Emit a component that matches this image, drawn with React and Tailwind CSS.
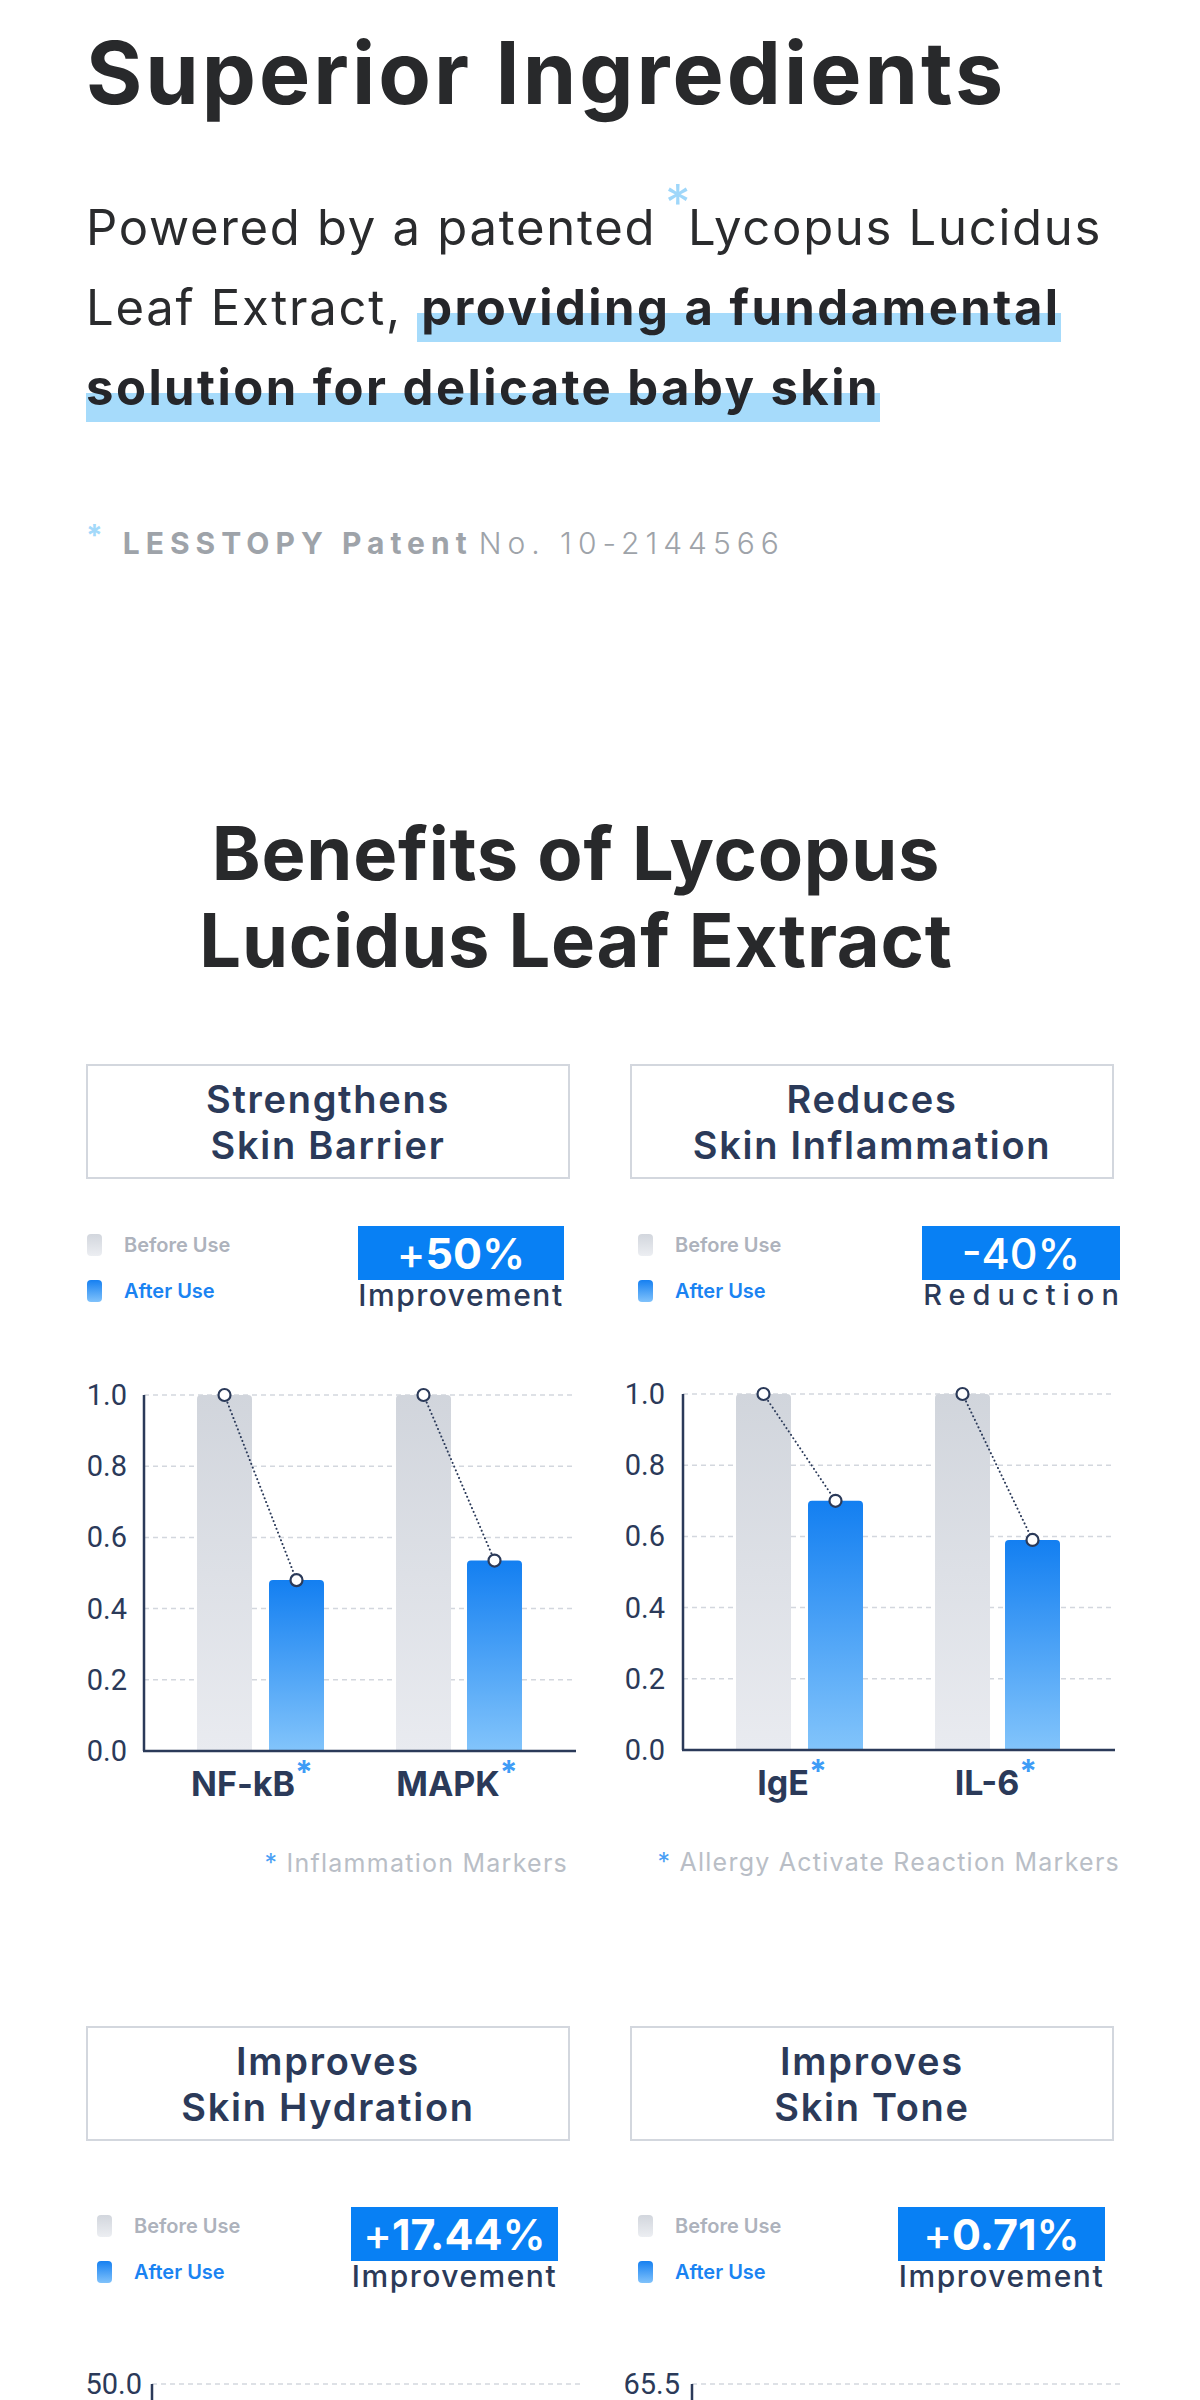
import React from 'react';

const NAVY = '#2b3a59';

function barPath(x, w, top, bottom) {
  const r = 4;
  return `M${x},${bottom} L${x},${top + r} Q${x},${top} ${x + r},${top} L${x + w - r},${top} Q${x + w},${top} ${x + w},${top + r} L${x + w},${bottom} Z`;
}

function Chart({ id, axisX, labelRight, gridEnd, groups, yLabels }) {
  const y0 = 25;
  const yb = 381;
  const h = yb - y0;
  const grids = [0, 1, 2, 3, 4].map((i) => y0 + (i * h) / 5);
  const bw = 55;
  return (
    <svg width="500" height="440" viewBox="0 0 500 440" className="block overflow-visible">
      <defs>
        <linearGradient id={`${id}-g`} x1="0" y1="0" x2="0" y2="1">
          <stop offset="0" stopColor="#d1d5dc" />
          <stop offset="1" stopColor="#e9ebf0" />
        </linearGradient>
        <linearGradient id={`${id}-b`} x1="0" y1="0" x2="0" y2="1">
          <stop offset="0" stopColor="#137ff1" />
          <stop offset="1" stopColor="#82c4fb" />
        </linearGradient>
      </defs>
      {grids.map((gy, i) => (
        <line key={i} x1={axisX} y1={gy} x2={gridEnd} y2={gy} stroke="#d3d7de" strokeWidth="1.5" strokeDasharray="5 4" />
      ))}
      {groups.map((g, i) => {
        const bt = yb - g.after * h;
        const gt = yb - g.before * h;
        return (
          <g key={i}>
            <path d={barPath(g.gx, bw, gt, yb)} fill={`url(#${id}-g)`} />
            <path d={barPath(g.bx, bw, bt, yb)} fill={`url(#${id}-b)`} />
            <line x1={g.gx + bw / 2} y1={gt} x2={g.bx + bw / 2} y2={bt} stroke={NAVY} strokeWidth="2" strokeDasharray="0.1 4" strokeLinecap="round" />
            <circle cx={g.gx + bw / 2} cy={gt} r="6" fill="#fff" stroke={NAVY} strokeWidth="2.2" />
            <circle cx={g.bx + bw / 2} cy={bt} r="6" fill="#fff" stroke={NAVY} strokeWidth="2.2" />
            <text x={g.lx} y="426" textAnchor="middle" fontFamily="Inter, sans-serif" fontWeight="700" fontSize="34" fill={NAVY}>
              {g.label}
              <tspan fill="#3f9cf6" fontSize="32" dy="-12">*</tspan>
            </text>
          </g>
        );
      })}
      <line x1={axisX} y1={y0} x2={axisX} y2={yb} stroke={NAVY} strokeWidth="2.5" />
      <line x1={axisX - 1} y1={yb} x2={gridEnd} y2={yb} stroke={NAVY} strokeWidth="2.5" />
      {yLabels.map((t, i) => (
        <text key={i} x={labelRight} y={y0 + (i * h) / 5 + 10} textAnchor="end" fontFamily="Roboto, sans-serif" fontSize="29" fill={NAVY}>
          {t}
        </text>
      ))}
    </svg>
  );
}

function Legend({ pl }) {
  return (
    <div className={`flex flex-col gap-[24px] pt-[8px] ${pl}`}>
      <div className="flex h-[22px] items-center gap-[22px]">
        <span className="h-[22px] w-[15px] rounded-[4px] bg-[linear-gradient(#d2d6dd,#eceef2)]" />
        <span className="text-[20px] font-semibold leading-none text-[#adb2bc]">Before Use</span>
      </div>
      <div className="flex h-[22px] items-center gap-[22px]">
        <span className="h-[22px] w-[15px] rounded-[4px] bg-[linear-gradient(#1680f1,#80c2fb)]" />
        <span className="text-[20px] font-semibold leading-none text-[#1a83f2]">After Use</span>
      </div>
    </div>
  );
}

function Card({ title, legendPl, badge, badgeCls, labelNode, headerMt, chartMt, chart, note, noteCls }) {
  return (
    <div className="flex flex-col">
      <div className="flex h-[115px] flex-col items-center justify-center border-2 border-[#d3d7de] text-center text-[38px] font-semibold leading-[46px] tracking-[0.045em] text-[#2b3a59]">
        {title.map((t) => (
          <div key={t}>{t}</div>
        ))}
      </div>
      <div className={`flex items-start justify-between ${headerMt}`}>
        <Legend pl={legendPl} />
        <div className={`flex flex-col items-stretch ${badgeCls}`}>
          <div className="flex h-[54px] items-center justify-center bg-[#0880f4] text-[43px] leading-none text-white">{badge}</div>
          {labelNode}
        </div>
      </div>
      <div className={chartMt}>{chart}</div>
      {note && <div className={`mt-[41px] text-right text-[25px] leading-none tracking-[0.05em] text-[#b9bec6] ${noteCls}`}>{note}</div>}
    </div>
  );
}

const improvement = (
  <div className="-mx-[4px] whitespace-nowrap text-center text-[30px] font-medium leading-none tracking-[0.05em] text-[#2b3a59]">Improvement</div>
);

export default function App() {
  return (
    <div className="w-[1200px] bg-white pb-[200px] font-['Inter',sans-serif]">
      <section className="px-[86px] pt-[30px]">
        <h1 className="whitespace-nowrap text-[86px] font-bold leading-none tracking-[0.035em] text-[#28292b]">Superior Ingredients</h1>
        <p className="mt-[72px] whitespace-nowrap text-[49px] font-normal leading-[80px] tracking-[0.035em] text-[#2a2b2d]">
          Powered by a patented
          <span className="relative -top-[24px] ml-[9px] -mr-[4px] text-[50px] font-normal leading-none text-[#9fd7fa]">*</span>
          Lycopus Lucidus
          <br />
          Leaf Extract,{' '}
          <span className="bg-[linear-gradient(transparent_55%,#a6dbfb_55%)] pb-[5px] pl-[4px] font-bold tracking-[0.05em] text-[#25262a]">
            providing a fundamental
            <br />
            solution for delicate baby skin
          </span>
        </p>
        <p className="mt-[100px] flex items-baseline whitespace-nowrap text-[30px] leading-none tracking-[0.2em] text-[#9ea3a9]">
          <span className="relative -top-[8px] mr-[14px] text-[30px] font-bold text-[#a3d9fa]">*</span>
          <span className="font-bold">LESSTOPY Patent</span>
          <span className="ml-[6px] font-light">No. 10-2144566</span>
        </p>
      </section>

      <section className="px-[86px]">
        <h2 className="mt-[252px] pr-[48px] text-center text-[74px] font-bold leading-[87px] tracking-[0.01em] text-[#28292b]">
          Benefits of Lycopus
          <br />
          Lucidus Leaf Extract
        </h2>

        <div className="mt-[80px] grid grid-cols-2 gap-x-[60px]">
          <Card
            title={['Strengthens', 'Skin Barrier']}
            legendPl="pl-[1px]"
            badge={
              <span>
                <span className="font-medium">+</span>
                <span className="font-bold">50</span>
                <span className="font-semibold">%</span>
              </span>
            }
            badgeCls="mr-[6px] w-[206px]"
            labelNode={improvement}
            headerMt="mt-[47px]"
            chartMt="mt-[60px]"
            chart={
              <Chart
                id="c1"
                axisX={58}
                labelRight={41}
                gridEnd={490}
                yLabels={['1.0', '0.8', '0.6', '0.4', '0.2', '0.0']}
                groups={[
                  { gx: 111, bx: 183, before: 1, after: 0.48, lx: 166, label: 'NF-kB' },
                  { gx: 310, bx: 381, before: 1, after: 0.535, lx: 371, label: 'MAPK' },
                ]}
              />
            }
            note={
              <>
                <span className="text-[#4a9ff5]">*</span> Inflammation Markers
              </>
            }
            noteCls="pr-[2px]"
          />
          <Card
            title={['Reduces', 'Skin Inflammation']}
            legendPl="pl-[8px]"
            badge={<span className="font-medium">-40%</span>}
            badgeCls="-mr-[6px] w-[198px]"
            labelNode={<div className="-mr-[7px] text-center text-[29px] font-medium leading-none tracking-[7px] text-[#2b3a59]">Reduction</div>}
            headerMt="mt-[47px]"
            chartMt="mt-[60px]"
            chart={
              <Chart
                id="c2"
                axisX={53}
                labelRight={35}
                gridEnd={485}
                yLabels={['1.0', '0.8', '0.6', '0.4', '0.2', '0.0']}
                groups={[
                  { gx: 106, bx: 178, before: 1, after: 0.7, lx: 162, label: 'IgE' },
                  { gx: 305, bx: 375, before: 1, after: 0.59, lx: 366, label: 'IL-6' },
                ]}
              />
            }
            note={
              <>
                <span className="text-[#4a9ff5]">*</span> Allergy Activate Reaction Markers
              </>
            }
            noteCls="-mr-[6px] whitespace-nowrap"
          />
        </div>

        <div className="mt-[150px] grid grid-cols-2 gap-x-[60px]">
          <Card
            title={['Improves', 'Skin Hydration']}
            legendPl="pl-[11px]"
            badge={
              <span>
                <span className="font-medium">+</span>
                <span className="font-bold">17.44</span>
                <span className="font-semibold">%</span>
              </span>
            }
            badgeCls="mr-[12px] w-[207px]"
            labelNode={improvement}
            headerMt="mt-[66px]"
            chartMt="mt-[68px]"
            chart={
              <Chart
                id="c3"
                axisX={66}
                labelRight={56}
                gridEnd={496}
                yLabels={['50.0', '45.0', '40.0', '35.0', '30.0', '25.0']}
                groups={[
                  { gx: 130, bx: 202, before: 0.62, after: 0.8, lx: 190, label: 'Week 2' },
                  { gx: 320, bx: 392, before: 0.62, after: 0.73, lx: 380, label: 'Week 4' },
                ]}
              />
            }
          />
          <Card
            title={['Improves', 'Skin Tone']}
            legendPl="pl-[8px]"
            badge={
              <span>
                <span className="font-medium">+</span>
                <span className="font-bold">0.71</span>
                <span className="font-semibold">%</span>
              </span>
            }
            badgeCls="mr-[9px] w-[207px]"
            labelNode={improvement}
            headerMt="mt-[66px]"
            chartMt="mt-[68px]"
            chart={
              <Chart
                id="c4"
                axisX={62}
                labelRight={50}
                gridEnd={490}
                yLabels={['65.5', '65.0', '64.5', '64.0', '63.5', '63.0']}
                groups={[
                  { gx: 126, bx: 198, before: 0.5, after: 0.72, lx: 186, label: 'Week 2' },
                  { gx: 316, bx: 388, before: 0.5, after: 0.8, lx: 376, label: 'Week 4' },
                ]}
              />
            }
          />
        </div>
      </section>
    </div>
  );
}
